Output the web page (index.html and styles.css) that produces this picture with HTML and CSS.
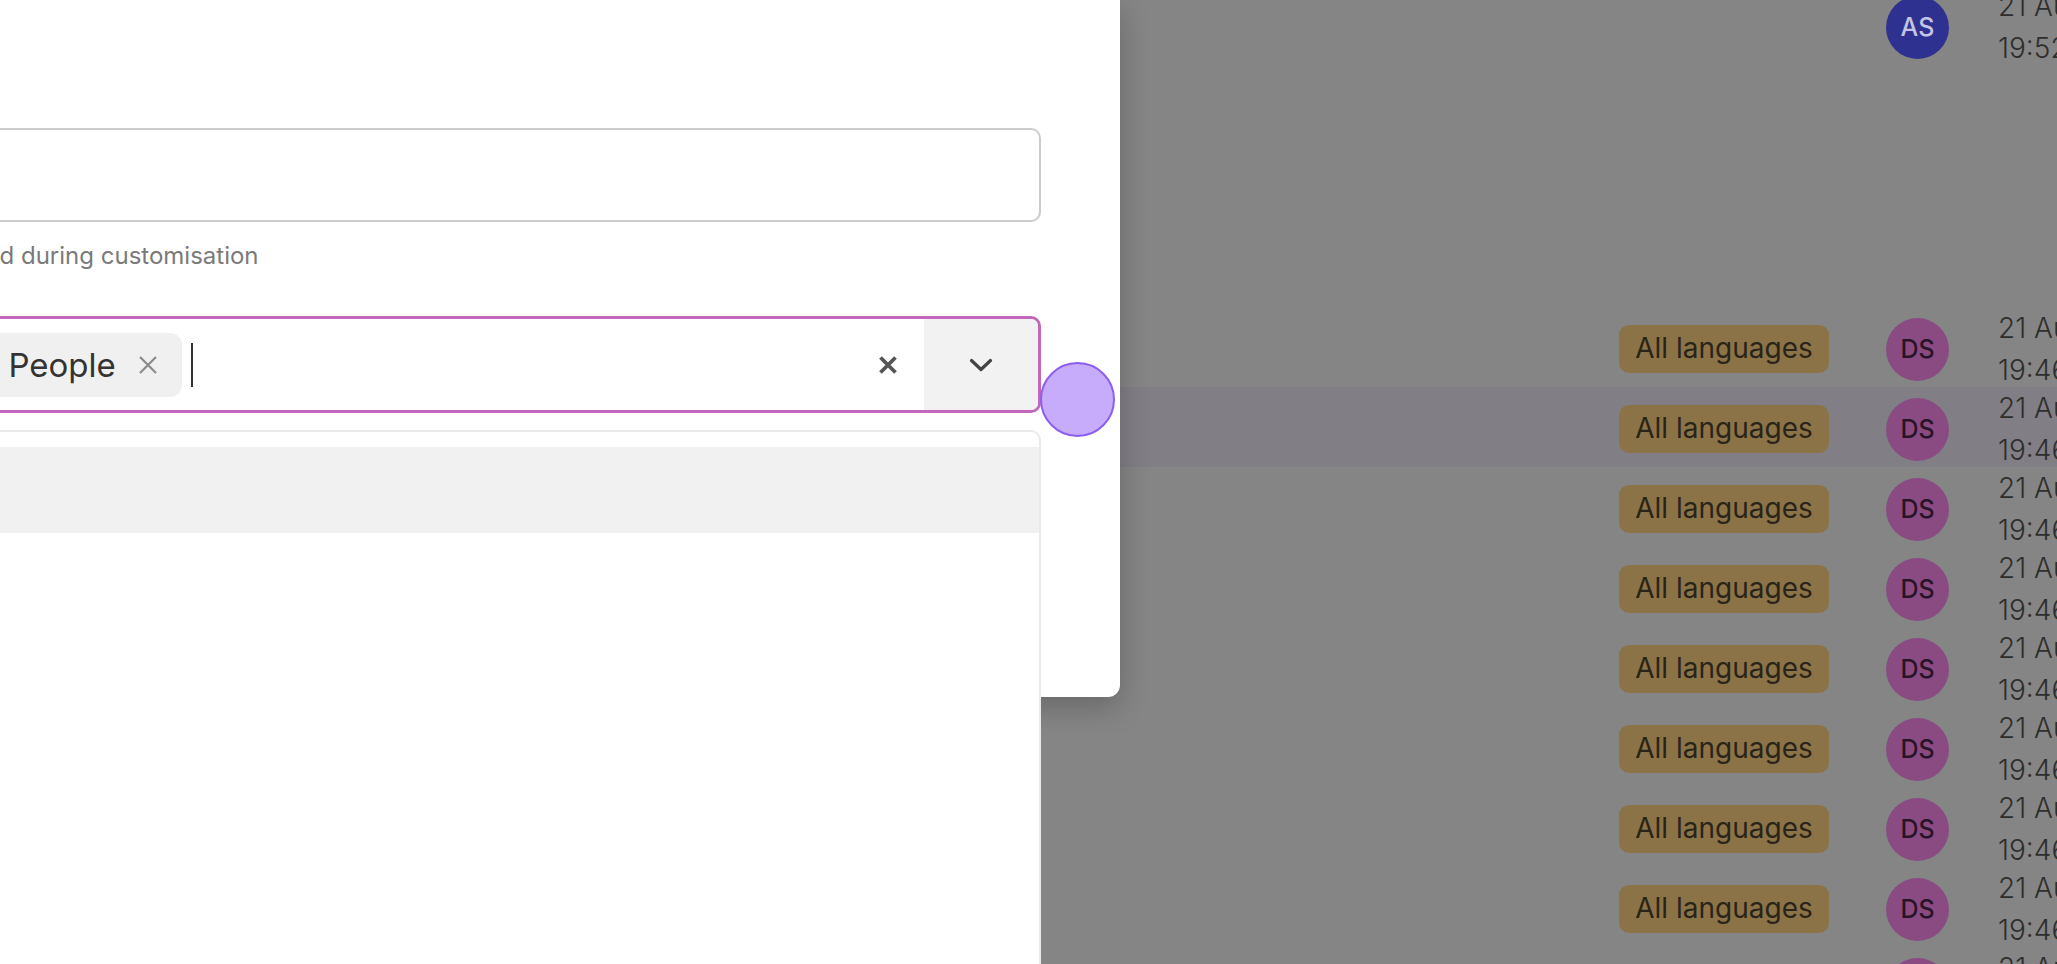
FILE: index.html
```html
<!DOCTYPE html>
<html lang="en">
<head>
<meta charset="utf-8">
<title>Edit tags</title>
<link rel="stylesheet" href="styles.css">
</head>
<body>
<main class="page">
  <div class="table">
    <div class="row row-tall">
      <div class="cell-tags"></div>
      <div class="cell-avatar"><span class="avatar avatar-as">AS</span></div>
      <div class="cell-date"><span>21 Aug</span><span>19:52</span></div>
    </div>
    <div class="row">
      <div class="cell-tags"><span class="badge">All languages</span></div>
      <div class="cell-avatar"><span class="avatar">DS</span></div>
      <div class="cell-date"><span>21 Aug</span><span>19:46</span></div>
    </div>
    <div class="row row-hover">
      <div class="cell-tags"><span class="badge">All languages</span></div>
      <div class="cell-avatar"><span class="avatar">DS</span></div>
      <div class="cell-date"><span>21 Aug</span><span>19:46</span></div>
    </div>
    <div class="row">
      <div class="cell-tags"><span class="badge">All languages</span></div>
      <div class="cell-avatar"><span class="avatar">DS</span></div>
      <div class="cell-date"><span>21 Aug</span><span>19:46</span></div>
    </div>
    <div class="row">
      <div class="cell-tags"><span class="badge">All languages</span></div>
      <div class="cell-avatar"><span class="avatar">DS</span></div>
      <div class="cell-date"><span>21 Aug</span><span>19:46</span></div>
    </div>
    <div class="row">
      <div class="cell-tags"><span class="badge">All languages</span></div>
      <div class="cell-avatar"><span class="avatar">DS</span></div>
      <div class="cell-date"><span>21 Aug</span><span>19:46</span></div>
    </div>
    <div class="row">
      <div class="cell-tags"><span class="badge">All languages</span></div>
      <div class="cell-avatar"><span class="avatar">DS</span></div>
      <div class="cell-date"><span>21 Aug</span><span>19:46</span></div>
    </div>
    <div class="row">
      <div class="cell-tags"><span class="badge">All languages</span></div>
      <div class="cell-avatar"><span class="avatar">DS</span></div>
      <div class="cell-date"><span>21 Aug</span><span>19:46</span></div>
    </div>
    <div class="row">
      <div class="cell-tags"><span class="badge">All languages</span></div>
      <div class="cell-avatar"><span class="avatar">DS</span></div>
      <div class="cell-date"><span>21 Aug</span><span>19:46</span></div>
    </div>
    <div class="row">
      <div class="cell-tags"><span class="badge">English</span><span class="badge badge-teal">FR</span></div>
      <div class="cell-avatar"><span class="avatar">DS</span></div>
      <div class="cell-date"><span>21 Aug</span><span>19:46</span></div>
    </div>
  </div>

  <section class="modal">
    <div class="form">
      <div class="text-input"></div>
      <p class="help">These tags will only be used during customisation</p>
      <div class="select">
        <div class="values">
          <span class="chip">Events
            <svg class="chip-x" viewBox="0 0 18 18" width="18" height="18"><path d="M1 1 L17 17 M17 1 L1 17"/></svg>
          </span>
          <span class="chip">People
            <svg class="chip-x" viewBox="0 0 18 18" width="18" height="18"><path d="M1 1 L17 17 M17 1 L1 17"/></svg>
          </span>
          <span class="caret"></span>
        </div>
        <div class="clear">
          <svg viewBox="0 0 20 20" width="20" height="20"><path d="M2.5 2.5 L17.5 17.5 M17.5 2.5 L2.5 17.5"/></svg>
        </div>
        <div class="toggle">
          <svg viewBox="0 0 24 14" width="24" height="14"><path d="M2.5 2.5 L12 11.5 L21.5 2.5"/></svg>
        </div>
      </div>
      <div class="menu">
        <div class="option option-active"></div>
        <div class="option"></div>
        <div class="option"></div>
      </div>
    </div>
  </section>

  <span class="click-dot"></span>
</main>
</body>
</html>
```

FILE: styles.css
```css
* { box-sizing: border-box; }

html, body {
  margin: 0;
  padding: 0;
}

body {
  width: 2057px;
  height: 964px;
  overflow: hidden;
  font-family: "Inter", "Noto Sans", sans-serif;
  background: #858585;
}

.page {
  position: relative;
  width: 2057px;
  height: 964px;
  overflow: hidden;
  background: #858585;
}

/* ---------- dimmed table behind the modal ---------- */
.table {
  margin-left: 1120px;
  width: 1038px;
  display: flex;
  flex-direction: column;
}

.row {
  display: grid;
  grid-template-columns: 1fr 267px 112px 160px;
  align-items: center;
  height: 80px;
}

.row::before { content: ""; }

.row-tall {
  height: 560px;
  margin-top: -253px;
}

.row-hover {
  background: #817e85;
}

.cell-tags {
  display: flex;
  justify-content: center;
  gap: 24px;
  padding-right: 57px;
}

.badge {
  display: inline-block;
  height: 48px;
  line-height: 47px;
  padding: 0 16px;
  border-radius: 10px;
  background: #8b7347;
  color: #2a2418;
  font-size: 28px;
  white-space: nowrap;
}

.badge-teal {
  background: #4a8a84;
}

.cell-avatar {
  display: flex;
}

.avatar {
  width: 63px;
  height: 63px;
  border-radius: 50%;
  background: #894b82;
  color: #2b1329;
  display: flex;
  align-items: center;
  justify-content: center;
  font-size: 25px;
  font-weight: 500;
}

.avatar-as {
  background: #2f3191;
  color: #c3c4e4;
}

.cell-date {
  display: flex;
  flex-direction: column;
  font-size: 28px;
  line-height: 42px;
  font-weight: 300;
  color: #2e2e2e;
  white-space: nowrap;
}

/* ---------- modal ---------- */
.modal {
  position: absolute;
  left: 0;
  top: 0;
  width: 1120px;
  height: 697px;
  background: #ffffff;
  border-bottom-right-radius: 12px;
  box-shadow: 0 10px 30px rgba(0, 0, 0, 0.22);
  padding: 128px 79px 0 0;
}

.form {
  margin-left: -308px;
  display: flex;
  flex-direction: column;
}

.text-input {
  height: 94px;
  border: 2px solid #cccccc;
  border-radius: 10px;
  background: #ffffff;
}

.help {
  margin: 18px 0 0;
  font-size: 24px;
  line-height: 32px;
  color: #7a7a7a;
  white-space: nowrap;
}

.select {
  margin-top: 44px;
  height: 97px;
  border: 3px solid #c267bb;
  border-radius: 10px;
  display: flex;
  overflow: hidden;
  background: #ffffff;
}

.values {
  flex: 1;
  display: flex;
  align-items: center;
  gap: 10px;
  padding-left: 97px;
}

.chip {
  display: flex;
  align-items: center;
  gap: 23px;
  height: 64px;
  padding: 0 25px 0 18px;
  border-radius: 12px;
  background: #f0f0f0;
  color: #333333;
  font-size: 33px;
  white-space: nowrap;
}

.chip-x path {
  stroke: #8a8a8a;
  stroke-width: 2.2;
  fill: none;
}

.caret {
  width: 2px;
  height: 44px;
  margin-left: -1px;
  background: #333333;
}

.clear {
  width: 72px;
  display: flex;
  align-items: center;
  justify-content: center;
}

.clear path {
  stroke: #555555;
  stroke-width: 3.8;
  fill: none;
}

.toggle {
  width: 114px;
  background: #f2f2f2;
  display: flex;
  align-items: center;
  justify-content: center;
}

.toggle path {
  stroke: #444444;
  stroke-width: 3.2;
  fill: none;
  stroke-linecap: round;
  stroke-linejoin: round;
}

.menu {
  position: relative;
  margin-top: 17px;
  height: 620px;
  border: 2px solid #eaeaea;
  border-bottom: none;
  border-radius: 10px 10px 0 0;
  background: #ffffff;
  padding-top: 15px;
}

.option {
  height: 86px;
}

.option-active {
  background: #f1f1f1;
}

/* click indicator */
.click-dot {
  position: absolute;
  left: 1040px;
  top: 362px;
  width: 75px;
  height: 75px;
  border-radius: 50%;
  background: #c8acfc;
  border: 2px solid #8c5ef0;
}
```
